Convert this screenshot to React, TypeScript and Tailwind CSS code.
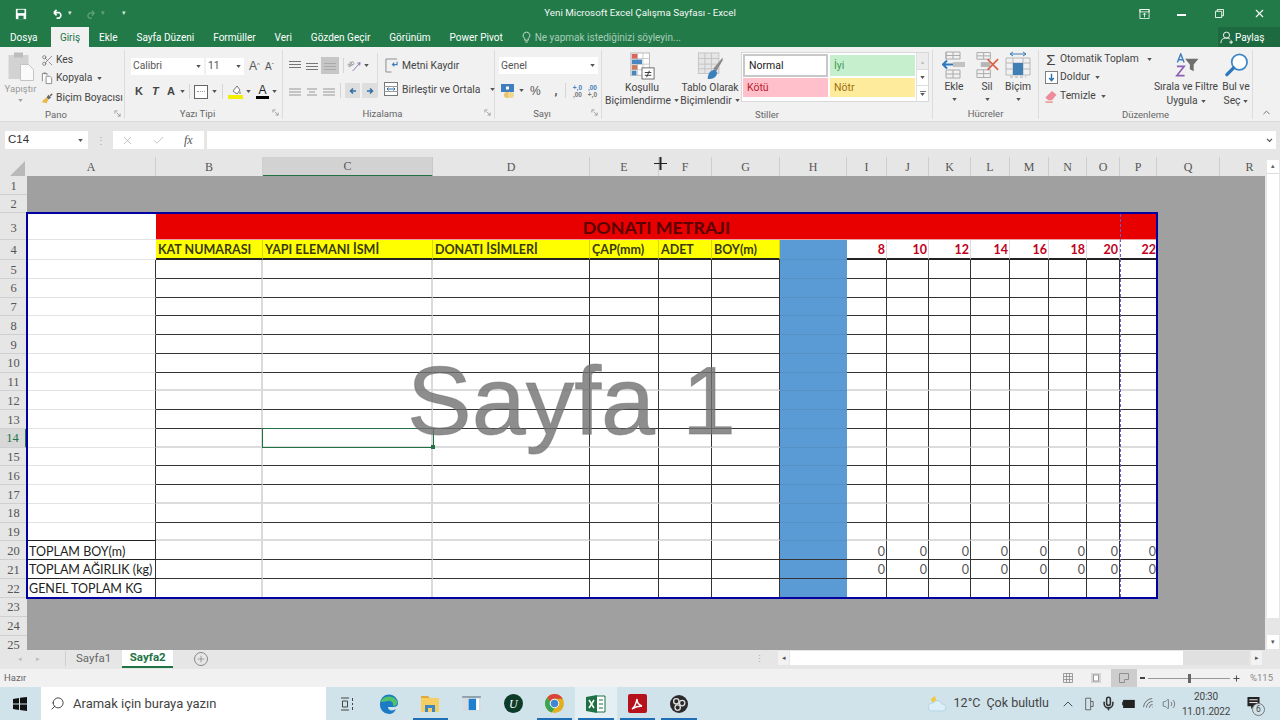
import type { ReactNode } from "react";
import { Check, ChevronUp, Mic, Plus, Scissors, Search, Volume2, Wifi, X } from "lucide-react";

const COLS = ["A", "B", "C", "D", "E", "F", "G", "H", "I", "J", "K", "L", "M", "N", "O", "P", "Q", "R"];
const ROWS = Array.from({ length: 25 }, (_, i) => i + 1);
const SIZES = ["I", "J", "K", "L", "M", "N", "O", "P"];
// the video frame shows some row lines washed out, these stay dark
const DARK_LINES = [4, 5, 6, 7, 8, 9, 10, 12, 13, 15, 16, 18, 20, 21];

function Caret({ className = "" }: { className?: string }) {
  return (
    <svg viewBox="0 0 6 4" className={`w-[5px] h-[3px] shrink-0 ${className}`} aria-hidden="true">
      <path d="M0 0h6L3 4Z" fill="#555" />
    </svg>
  );
}

function Launcher() {
  return (
    <svg viewBox="0 0 8 8" className="w-[7px] h-[7px]" aria-hidden="true">
      <path d="M1 1h3M1 1v3M3 3l4 4M7 4v3H4" fill="none" stroke="#999" strokeWidth="1" />
    </svg>
  );
}

function Group({ label, width, launcher, children }: { label: string; width: string; launcher?: boolean; children: ReactNode }) {
  return (
    <div className={`${width} shrink-0 flex flex-col mt-[3px] mb-[2px] border-r border-[#dcdcdc]`}>
      <div className="h-[57px] flex">{children}</div>
      <div className={`h-[13px] pt-[3px] flex items-center justify-center relative text-[9.500px] leading-none text-[#666] ${launcher ? "pr-[12px]" : ""}`}>
        {label}
        {launcher && (
          <span className="absolute right-[3px] top-[3px]">
            <Launcher />
          </span>
        )}
      </div>
    </div>
  );
}

function Combo({ text, width }: { text: string; width: string }) {
  return (
    <div className={`${width} h-[17px] bg-white flex items-center justify-between px-[2px] text-[10.300px] text-[#555]`}>
      <span>{text}</span>
      <Caret className="mr-[1px]" />
    </div>
  );
}

function Align({ top = false, mode = "left", faded = false, color }: { top?: boolean; mode?: string; faded?: boolean; color?: string }) {
  const c = color ?? (faded ? "#c4c4c4" : "#777");
  const w = mode === "center" ? [1, 3, 1] : [0, 0, 0];
  return (
    <svg viewBox="0 0 12 10" className="w-[12px] h-[10px]" aria-hidden="true">
      {[0, 1, 2].map((i) => (
        <rect key={i} x={w[i]} y={(top ? 0 : 2) + i * 3} width={12 - w[i] * 2} height={faded ? 2 : 1} fill={c} />
      ))}
    </svg>
  );
}

function CopyIcon() {
  return (
    <svg viewBox="0 0 14 14" className="w-[13px] h-[13px]" aria-hidden="true">
      <path d="M1.500 10V1.500h5v2M5.500 4.500h4l2 2v6h-6Z" fill="#fff" stroke="#888" />
      <rect x="3" y="0.500" width="2" height="2" fill="#888" />
    </svg>
  );
}

function BrushIcon() {
  return (
    <svg viewBox="0 0 14 14" className="w-[13px] h-[13px]" aria-hidden="true">
      <path d="M8 3l3 3-3 2-2-2Z" fill="#666" />
      <path d="M6 6l2 2-2 4-5-1 2-3Z" fill="#e9b949" />
      <path d="M9.500 3.500l2-2 1 1-2 2Z" fill="#555" />
    </svg>
  );
}

function PasteIcon() {
  return (
    <svg viewBox="0 0 26 29" className="w-[26px] h-[29px]" aria-hidden="true">
      <rect x="0.500" y="3" width="20" height="24" fill="#d2d2d2" />
      <rect x="6" y="0.500" width="9" height="5" fill="#bdbdbd" />
      <path d="M12.500 12.500h8l5 5v11h-13Z" fill="#fafafa" stroke="#c4c4c4" />
    </svg>
  );
}

function OrientIcon() {
  return (
    <svg viewBox="0 0 16 14" className="w-[15px] h-[13px]" aria-hidden="true">
      <text x="1" y="8" fontSize="7" fill="#777" fontFamily="Liberation Sans" transform="rotate(-35 4 7)">ab</text>
      <path d="M6 13L14 4M14 4l-3 .5M14 4l-.5 3" stroke="#8a6fb0" fill="none" />
    </svg>
  );
}

function WrapIcon() {
  return (
    <svg viewBox="0 0 14 16" className="w-[13px] h-[15px]" aria-hidden="true">
      <path d="M1 1h12M1 1v14h6" fill="none" stroke="#888" />
      <path d="M13 4v3H8M10 5L8 7l2 2" fill="none" stroke="#3f7fbf" strokeWidth="1.200" />
    </svg>
  );
}

function MergeIcon() {
  return (
    <svg viewBox="0 0 14 14" className="w-[14px] h-[14px]" aria-hidden="true">
      <rect x="0.500" y="0.500" width="13" height="13" fill="#fff" stroke="#777" />
      <path d="M0 4.500h14M0 9.500h14" stroke="#999" />
      <path d="M3 7h8M3 7l1.500-1.500M3 7l1.500 1.500M11 7L9.500 5.500M11 7L9.500 8.500" stroke="#2f6ea8" fill="none" />
    </svg>
  );
}

function Indent({ flip = false }: { flip?: boolean }) {
  return (
    <div className="w-[15px] h-[15px] bg-[#dedede] flex items-center justify-center">
      <svg viewBox="0 0 8 8" className={`w-[8px] h-[8px] ${flip ? "-scale-x-100" : ""}`} aria-hidden="true">
        <path d="M7 4H2M4 1.500L1.500 4 4 6.500" fill="none" stroke="#2f6ea8" strokeWidth="1.500" />
      </svg>
    </div>
  );
}

function CurrencyIcon() {
  return (
    <svg viewBox="0 0 16 16" className="w-[16px] h-[16px]" aria-hidden="true">
      <rect x="1" y="1" width="13" height="8" fill="#3f7fbf" />
      <rect x="6" y="3.500" width="3" height="3" fill="#fff" />
      <circle cx="7" cy="12" r="3" fill="#e8c46a" />
      <circle cx="11" cy="12" r="3" fill="#f0d792" />
    </svg>
  );
}

function Decimal({ flip = false }: { flip?: boolean }) {
  return (
    <div className="w-[13px] text-[6.500px] leading-[7px] font-bold text-[#777] text-right font-['Liberation_Sans',sans-serif]">
      <div className="text-[#3f7fbf]">{flip ? ",00" : "+,0"}</div>
      <div>{flip ? "+,0" : ",00"}</div>
    </div>
  );
}

function CondFormatIcon() {
  return (
    <svg viewBox="0 0 28 30" className="w-[26px] h-[28px]" aria-hidden="true">
      <rect x="2" y="1" width="20" height="24" fill="#fff" stroke="#b5b5b5" />
      <path d="M2 7h20M2 13h20M2 19h20M9 1v24M15 1v24" stroke="#c8c8c8" />
      <rect x="3" y="2" width="6" height="5" fill="#d8665c" />
      <rect x="3" y="8" width="11" height="5" fill="#4a87c0" />
      <rect x="3" y="14" width="6" height="5" fill="#d0785a" />
      <rect x="3" y="20" width="5" height="5" fill="#4a87c0" />
      <rect x="14" y="17" width="13" height="12" fill="#fff" stroke="#666" />
      <path d="M17 22h7M17 25h7M22 20l-3 7" stroke="#333" fill="none" />
    </svg>
  );
}

function TableFormatIcon() {
  return (
    <svg viewBox="0 0 28 30" className="w-[27px] h-[28px]" aria-hidden="true">
      <rect x="1" y="1" width="22" height="22" fill="#e5e5e5" stroke="#c4c4c4" />
      <path d="M1 7h22M1 13h22M1 18h22M8 1v22M15 1v22" stroke="#c2c2c2" />
      <path d="M27 6L17 18l3 3L27 9Z" fill="#8a8a8a" />
      <path d="M11 29c0-6 3-10 8-10l2 3c0 5-4 7-10 7Z" fill="#3a80bd" />
    </svg>
  );
}

function StyleCell({ text, className }: { text: string; className: string }) {
  return <div className={`flex items-center px-[4px] text-[10.500px] ${className}`}>{text}</div>;
}

function InsertIcon() {
  return (
    <svg viewBox="0 0 24 28" className="w-[24px] h-[28px]" aria-hidden="true">
      <path d="M4 1h14v7H4ZM4 1v7M11 1v7M4 4.500h14M4 19h14v8H4ZM11 19v8M4 23h14" fill="none" stroke="#aaa" />
      <rect x="11" y="11" width="12" height="5" fill="#c2c2c2" />
      <path d="M1 13.500h10M5 9.500l-4 4 4 4" fill="none" stroke="#2f78bd" strokeWidth="2" />
    </svg>
  );
}

function DeleteIcon() {
  return (
    <svg viewBox="0 0 26 28" className="w-[25px] h-[28px]" aria-hidden="true">
      <path d="M2 1h14v7H2ZM9 1v7M2 4.500h14M2 19h14v8H2ZM9 19v8M2 23h14" fill="none" stroke="#aaa" />
      <rect x="6" y="11" width="10" height="5" fill="#b5b5b5" />
      <path d="M13 8l11 11M24 8L13 19" stroke="#d9634c" strokeWidth="1.800" />
    </svg>
  );
}

function CellFormatIcon() {
  return (
    <svg viewBox="0 0 26 28" className="w-[26px] h-[28px]" aria-hidden="true">
      <path d="M5 3h16M5 3l3-2M5 3l3 2M21 3l-3-2M21 3l-3 2" fill="none" stroke="#3a7cb8" />
      <path d="M1 7h24v17H1ZM1 12h24M1 18h24M8 7v17M18 7v17" fill="none" stroke="#b8b8b8" />
      <rect x="8" y="12" width="10" height="12" fill="#3f7fb5" />
      <path d="M5 26h16" stroke="#aaa" strokeDasharray="3 2" />
    </svg>
  );
}

function FillIcon() {
  return (
    <svg viewBox="0 0 14 14" className="w-[13px] h-[13px]" aria-hidden="true">
      <rect x="0.500" y="0.500" width="13" height="13" fill="#fff" stroke="#777" />
      <path d="M7 3v7M4.500 7.500L7 10.500l2.500-3" fill="none" stroke="#2f6ea8" strokeWidth="1.500" />
    </svg>
  );
}

function EraserIcon() {
  return (
    <svg viewBox="0 0 14 14" className="w-[14px] h-[13px]" aria-hidden="true">
      <path d="M8 1l5 4-5 6H4L1 8Z" fill="#ee8b9a" />
      <path d="M1 13h8" stroke="#d9634c" />
    </svg>
  );
}

function SortIcon() {
  return (
    <svg viewBox="0 0 27 25" className="w-[27px] h-[24px]" aria-hidden="true">
      <path d="M4 10L7.500 1 11 10M5.200 7h4.600" fill="none" stroke="#3f7fbf" strokeWidth="1.500" />
      <path d="M3.500 14H11L3.500 23.500H11.500" fill="none" stroke="#8a5fb5" strokeWidth="1.800" />
      <path d="M12 6h14l-5 6v7l-4-2v-5Z" fill="#6f6f6f" />
    </svg>
  );
}

function FindIcon() {
  return (
    <svg viewBox="0 0 26 24" className="w-[25px] h-[24px]" aria-hidden="true">
      <circle cx="16" cy="9" r="8" fill="#fff" stroke="#3f86c6" strokeWidth="1.800" />
      <path d="M10 15L3 22" stroke="#2f78bd" strokeWidth="3.500" strokeLinecap="round" />
    </svg>
  );
}

function SmallButton({ icon, text, caret, className = "" }: { icon: ReactNode; text: string; caret?: boolean; className?: string }) {
  return (
    <div className={`h-[18px] flex items-center gap-[2px] text-[10.300px] text-[#444] whitespace-nowrap ${className}`}>
      <span className="w-[14px] flex justify-center shrink-0">{icon}</span>
      <span>{text}</span>
      {caret && <Caret className="ml-[3px]" />}
    </div>
  );
}

function BigButton({ icon, lines, width, caretLine }: { icon: ReactNode; lines: string[]; width: string; caretLine?: boolean }) {
  return (
    <div className={`${width} shrink-0 flex flex-col items-center text-[10.300px] leading-[13px] text-[#444] whitespace-nowrap`}>
      <div className="h-[29px] flex items-start">{icon}</div>
      {lines.map((l, i) => (
        <div key={l} className="flex items-center gap-[3px]">
          {l}
          {caretLine && i === lines.length - 1 && <Caret />}
        </div>
      ))}
      {!caretLine && <Caret className="mt-[5px]" />}
    </div>
  );
}

function Ribbon() {
  return (
    <div className="h-[75px] bg-[#f1f1f1] flex border-b border-[#dadada]">
      <Group label="Pano" width="w-[125px]" launcher>
        <div className="w-[41px] flex flex-col items-center pt-[2px] text-[9.500px] leading-[12px] text-[#999]">
          <PasteIcon />
          <span className="mt-[2px]">Yapıştır</span>
          <Caret className="mt-[4px] opacity-50" />
        </div>
        <div className="flex flex-col -ml-[1px] pt-[1px]">
          <SmallButton icon={<Scissors size={13} strokeWidth={1.300} className="text-[#666]" />} text="Kes" />
          <SmallButton icon={<CopyIcon />} text="Kopyala" caret />
          <SmallButton icon={<BrushIcon />} text="Biçim Boyacısı" className="mt-[2px]" />
        </div>
      </Group>

      <Group label="Yazı Tipi" width="w-[158px]" launcher>
        <div className="pl-[6px] pt-[7px] flex flex-col gap-[8px]">
          <div className="flex items-center">
            <Combo text="Calibri" width="w-[73px]" />
            <div className="w-[2px]" />
            <Combo text="11" width="w-[38px]" />
            <span className="ml-[5px] w-[16px] text-[12px] text-[#555] font-['Liberation_Sans',sans-serif]">A<sup className="text-[6px]">^</sup></span>
            <span className="w-[16px] text-[10px] text-[#555] font-['Liberation_Sans',sans-serif]">A<sup className="text-[6px]">ˇ</sup></span>
          </div>
          <div className="flex items-center h-[17px] text-[11px] font-bold text-[#444] font-['Liberation_Sans',sans-serif]">
            <span className="w-[16px] pl-[3px] ml-[1px]">K</span>
            <span className="w-[17px] pl-[4px] italic">T</span>
            <span className="w-[13px] pl-[2px]">A</span>
            <Caret className="ml-[2px]" />
            <span className="w-px h-[15px] bg-[#d5d5d5] ml-[4px]" />
            <span className="ml-[4px] w-[14px] h-[14px] border border-[#666] bg-white flex items-center justify-center">
              <span className="w-[8px] border-t border-dotted border-[#999]" />
            </span>
            <Caret className="ml-[4px]" />
            <span className="w-px h-[15px] bg-[#d5d5d5] ml-[5px]" />
            <span className="ml-[5px] w-[15px] flex flex-col items-center">
              <svg viewBox="0 0 12 10" className="w-[12px] h-[10px]" aria-hidden="true">
                <path d="M3 6l4-5 3 4-3 4Z" fill="#fff" stroke="#777" />
                <path d="M10 6l1 2.500h-2Z" fill="#777" />
              </svg>
              <span className="w-[15px] h-[4px] bg-[#f2f000]" />
            </span>
            <Caret className="ml-[3px]" />
            <span className="ml-[5px] w-[13px] flex flex-col items-center leading-[11px] text-[12px] font-normal text-[#222]">
              A<span className="w-[13px] h-[3px] bg-black" />
            </span>
            <Caret className="ml-[3px]" />
          </div>
        </div>
      </Group>

      <Group label="Hizalama" width="w-[212px]" launcher>
        <div className="w-[98px] pl-[6px] pt-[7px] flex flex-col gap-[8px]">
          <div className="flex items-center h-[17px]">
            <span className="w-[17px]"><Align top /></span>
            <span className="w-[15px]"><Align /></span>
            <span className="w-[18px] h-[17px] bg-[#c6c6c6] flex items-center justify-center"><Align color="#aaa" /></span>
            <span className="w-px h-[15px] bg-[#d5d5d5] ml-[4px]" />
            <span className="ml-[3px]"><OrientIcon /></span>
            <Caret className="ml-[2px]" />
          </div>
          <div className="flex items-center h-[17px]">
            <span className="w-[17px]"><Align faded /></span>
            <span className="w-[17px]"><Align faded mode="center" /></span>
            <span className="w-[17px]"><Align faded /></span>
            <span className="w-px h-[15px] bg-[#d5d5d5]" />
            <span className="ml-[4px]"><Indent /></span>
            <span className="ml-[2px]"><Indent flip /></span>
          </div>
        </div>
        <div className="border-l border-[#dcdcdc] h-[44px] mt-[3px] pl-[6px] pt-[5px] flex flex-col gap-[7px]">
          <SmallButton icon={<WrapIcon />} text="Metni Kaydır" className="gap-[4px]" />
          <SmallButton icon={<MergeIcon />} text="Birleştir ve Ortala" caret className="mt-[1px] gap-[4px] [&>svg]:ml-[6px]" />
        </div>
      </Group>

      <Group label="Sayı" width="w-[107px]" launcher>
        <div className="pl-[4px] pt-[7px] flex flex-col gap-[8px]">
          <Combo text="Genel" width="w-[99px]" />
          <div className="h-[17px] flex items-center text-[#555]">
            <span className="ml-[1px]"><CurrencyIcon /></span>
            <Caret className="ml-[3px]" />
            <span className="ml-[6px] w-[16px] text-[12px] font-['Liberation_Sans',sans-serif]">%</span>
            <span className="ml-[3px] w-[14px] text-center text-[12px] font-bold leading-[10px]">,</span>
            <span className="w-px h-[15px] bg-[#d5d5d5] ml-[2px]" />
            <span className="ml-[3px]"><Decimal /></span>
            <span className="ml-[2px]"><Decimal flip /></span>
          </div>
        </div>
      </Group>

      <Group label="Stiller" width="w-[331px]">
        <div className="w-[78px] pt-[2px] pl-[4px]">
          <BigButton icon={<CondFormatIcon />} lines={["Koşullu", "Biçimlendirme"]} width="w-[72px]" caretLine />
        </div>
        <div className="w-[60px] pt-[2px]">
          <BigButton icon={<TableFormatIcon />} lines={["Tablo Olarak", "Biçimlendir"]} width="w-[60px]" caretLine />
        </div>
        <div className="w-[188px] h-[50px] mt-[2px] ml-[1px] flex bg-white border border-[#d8d8d8]">
          <div className="w-[174px] grid grid-cols-2 grid-rows-[23px_19px] gap-x-[2px] gap-y-[1px] p-[1px]">
            <StyleCell text="Normal" className="border-2 border-[#c8c8c8] text-[#222]" />
            <StyleCell text="İyi" className="bg-[#c6efce] text-[#3f9a50] my-[1px]" />
            <StyleCell text="Kötü" className="bg-[#ffc0cb] text-[#b8202c]" />
            <StyleCell text="Nötr" className="bg-[#ffeb9c] text-[#9c6f10]" />
          </div>
          <div className="flex-1 flex flex-col border-l border-[#e0e0e0]">
            <div className="h-[16px] bg-[#ececec] flex items-center justify-center"><span className="text-[6px] text-[#bbb]">▴</span></div>
            <div className="h-[17px] flex items-center justify-center border-y border-[#dcdcdc]"><Caret /></div>
            <div className="flex-1 flex flex-col items-center justify-center gap-[1px]">
              <span className="w-[6px] h-px bg-[#777]" />
              <Caret />
            </div>
          </div>
        </div>
      </Group>

      <Group label="Hücreler" width="w-[106px]">
        <div className="flex pt-[1px] pl-[8px]">
          <BigButton icon={<InsertIcon />} lines={["Ekle"]} width="w-[26px]" />
          <BigButton icon={<DeleteIcon />} lines={["Sil"]} width="w-[26px] ml-[7px]" />
          <BigButton icon={<CellFormatIcon />} lines={["Biçim"]} width="w-[28px] ml-[4px]" />
        </div>
      </Group>

      <Group label="Düzenleme" width="w-[214px]">
        <div className="w-[127px] pl-[5px] flex flex-col">
          <SmallButton icon={<span className="text-[15px] leading-none text-[#444] font-['Liberation_Sans',sans-serif]">Σ</span>} text="Otomatik Toplam" caret className="[&>svg]:ml-[6px]" />
          <SmallButton icon={<FillIcon />} text="Doldur" caret />
          <SmallButton icon={<EraserIcon />} text="Temizle" caret className="mt-[1px]" />
        </div>
        <div className="pt-[3px] -ml-[6px]">
          <div className="w-[66px] flex flex-col items-center text-[10.300px] leading-[14px] text-[#444] whitespace-nowrap">
            <div className="h-[27px]"><SortIcon /></div>
            <div>Sırala ve Filtre</div>
            <div className="flex items-center gap-[3px]">Uygula <Caret /></div>
          </div>
        </div>
        <div className="pt-[3px] ml-[1px]">
          <div className="w-[32px] flex flex-col items-center text-[10.300px] leading-[14px] text-[#444] whitespace-nowrap">
            <div className="h-[27px]"><FindIcon /></div>
            <div>Bul ve</div>
            <div className="flex items-center gap-[3px]">Seç <Caret /></div>
          </div>
        </div>
      </Group>

      <div className="flex-1 flex items-end justify-center pb-[2px]">
        <ChevronUp size={11} className="text-[#666] mb-[1px]" />
      </div>
    </div>
  );
}

function TitleBar() {
  return (
    <div className="h-[27px] flex items-center text-white">
      <div className="flex-1 flex items-center">
        <svg viewBox="0 0 14 14" className="w-[12px] h-[12px] ml-[15px]" aria-hidden="true">
          <path d="M1 1h12v12H1Z" fill="#fff" />
          <rect x="3" y="2" width="8" height="4" fill="#227a48" />
          <rect x="4" y="9" width="6" height="4" fill="#227a48" />
        </svg>
        <svg viewBox="0 0 14 12" className="w-[13px] h-[11px] ml-[24px]" aria-hidden="true">
          <path d="M3 5h6a3.500 3.500 0 0 1 0 6H6M3 5l3-3M3 5l3 3" fill="none" stroke="#fff" strokeWidth="1.800" />
        </svg>
        <span className="ml-[4px] text-[7px] opacity-80">▾</span>
        <svg viewBox="0 0 14 12" className="w-[12px] h-[10px] ml-[13px] opacity-30" aria-hidden="true">
          <path d="M11 5H5a3.500 3.500 0 0 0 0 6h3M11 5L8 2M11 5L8 8" fill="none" stroke="#fff" strokeWidth="1.500" />
        </svg>
        <span className="ml-[4px] text-[7px] opacity-30">▾</span>
        <span className="ml-[17px] text-[7px] opacity-80">▾</span>
      </div>
      <div className="text-[9.800px] opacity-95">Yeni Microsoft Excel Çalışma Sayfası - Excel</div>
      <div className="flex-1 flex items-center justify-end">
        <svg viewBox="0 0 12 12" className="w-[11px] h-[10px] mr-[27px]" aria-hidden="true">
          <path d="M.5.5h11v11H.5Z" fill="none" stroke="#fff" />
          <path d="M.5.5h11v3H.5ZM6 10V5M4 7l2-2 2 2" fill="none" stroke="#fff" />
        </svg>
        <span className="w-[9px] h-[1.500px] bg-white mr-[29px] mt-[3px]" />
        <svg viewBox="0 0 10 10" className="w-[9px] h-[9px] mr-[29px]" aria-hidden="true">
          <path d="M.5 2.500h7v7h-7ZM2.500 2.500v-2h7v7h-2" fill="none" stroke="#fff" />
        </svg>
        <X size={13} strokeWidth={2} className="mr-[14px]" />
      </div>
    </div>
  );
}

function TabsBar() {
  const tabs = ["Ekle", "Sayfa Düzeni", "Formüller", "Veri", "Gözden Geçir", "Görünüm", "Power Pivot"];
  return (
    <div className="h-[20px] flex items-stretch text-[10px] text-white">
      <div className="w-[51px] pl-[10px] flex items-center">Dosya</div>
      <div className="w-[38px] bg-[#f1f1f1] text-[#217346] flex items-center justify-center">Giriş</div>
      <div className="ml-[10px] flex items-center gap-[19px] whitespace-nowrap">
        {tabs.map((t) => (
          <span key={t}>{t}</span>
        ))}
      </div>
      <div className="ml-[19px] flex items-center gap-[4px] text-[#a8cdb8]">
        <svg viewBox="0 0 10 14" className="w-[9px] h-[13px]" aria-hidden="true">
          <path d="M5 1a3.800 3.800 0 0 0-2 7v2h4V8a3.800 3.800 0 0 0-2-7ZM3.500 12h3" fill="none" stroke="#d5e5dc" />
        </svg>
        Ne yapmak istediğinizi söyleyin...
      </div>
      <div className="ml-auto w-[62px] bg-[#1e6a40] flex items-center gap-[2px] pl-[2px]">
        <svg viewBox="0 0 14 14" className="w-[13px] h-[13px]" aria-hidden="true">
          <circle cx="7" cy="4.500" r="3.300" fill="none" stroke="#fff" />
          <path d="M1 13c0-4 2.500-5.500 6-5.500 1.500 0 3 .4 4 1.500M10 12h4M12 10v4" fill="none" stroke="#fff" />
        </svg>
        Paylaş
      </div>
    </div>
  );
}

function FormulaBar() {
  return (
    <div className="h-[35px] bg-[#e6e6e6] flex items-start pt-[9px] pl-[5px] pr-[4px]">
      <div className="w-[83px] h-[18px] bg-white flex items-center justify-between pl-[3px] pr-[5px] text-[11.500px] text-[#333] font-['Liberation_Sans',sans-serif]">
        C14
        <Caret />
      </div>
      <div className="w-[25px] flex justify-center items-center h-[18px] text-[#aaa] text-[10px] tracking-tighter">⋮</div>
      <div className="w-[91px] h-[18px] bg-white flex items-center text-[#aaa]">
        <X size={13} strokeWidth={1.300} className="ml-[8px]" />
        <Check size={13} strokeWidth={1.300} className="ml-[18px]" />
        <span className="ml-[19px] text-[12px] italic text-[#555] font-['Liberation_Serif',serif]">fx</span>
      </div>
      <div className="flex-1 h-[18px] ml-[3px] bg-white flex items-center justify-end pr-[3px]">
        <svg viewBox="0 0 8 6" className="w-[7px] h-[5px]" aria-hidden="true">
          <path d="M1 1l3 3 3-3" fill="none" stroke="#555" strokeWidth="1.500" />
        </svg>
      </div>
    </div>
  );
}

function ColumnHeader() {
  return (
    <div className="h-[19px] grid grid-cols-[27px_129px_107px_170px_157px_69px_53px_68px_67px_40px_42px_42px_39px_39px_38px_33px_37px_63px_45px] bg-[#e6e6e6] text-[12px] text-[#555] font-['Liberation_Serif',serif] relative">
      <div className="flex items-end justify-end pr-[2px] pb-[1px]">
        <svg viewBox="0 0 15 15" className="w-[15px] h-[15px]" aria-hidden="true">
          <path d="M15 0v15H0Z" fill="#b9b9b9" />
        </svg>
      </div>
      {COLS.map((c) => (
        <div
          key={c}
          className={
            c === "C"
              ? "flex items-center justify-center bg-[#d2d2d2] border-b-2 border-[#217346] border-r border-r-[#c8c8c8]"
              : c === "R"
                ? "flex items-center justify-center pl-[14px] border-b border-b-[#bdbdbd]"
                : "flex items-center justify-center border-r border-[#cfcfcf] border-b border-b-[#bdbdbd]"
          }
        >
          {c}
        </div>
      ))}
      {/* mouse cursor caught in the frame */}
      <svg viewBox="0 0 13 13" className="absolute left-[654px] top-0 w-[13px] h-[13px]" aria-hidden="true">
        <path d="M6.500 0v13M0 6.500h13" stroke="#222" strokeWidth="1" />
        <path d="M5.500 0v13M7.500 0v13" stroke="#222" strokeWidth=".5" />
      </svg>
    </div>
  );
}

function cellClass(col: string, row: number) {
  const inTable = row >= 3 && row <= 22 && col !== "Q" && col !== "R";
  if (!inTable) return "";
  const classes: string[] = [];
  const isSize = SIZES.includes(col);

  if (col === "H") classes.push("bg-[#5b9bd5]");
  else if (row === 4 && col !== "A" && !isSize) classes.push("bg-[#ffff00]");
  else classes.push("bg-white");

  // horizontal lines
  if (col === "A") {
    classes.push(row >= 19 && row <= 21 ? "border-b border-b-[#222]" : "border-b border-b-[#e2e2e2]");
  } else if (col === "H" && row < 20) {
    classes.push("border-b border-b-[#5590c6]");
  } else if (DARK_LINES.includes(row)) {
    classes.push(row === 4 ? "border-b-2 border-b-[#222]" : "border-b border-b-[#333]");
  } else if (row < 22) {
    classes.push("border-b-2 border-b-[#dcdcdc]");
  }

  // vertical lines
  if (row >= 5) {
    if (col === "B" || col === "C") classes.push("border-r-2 border-r-[#dadada]");
    else if (col !== "P" && col !== "H") classes.push("border-r border-r-[#333]");
  } else if (row === 4 && col !== "H" && col !== "P" && col !== "A") {
    classes.push(isSize ? "border-r border-r-[#ddd]" : "border-r border-r-[#d8d800]");
  }
  return classes.join(" ");
}

function cellText(col: string, row: number): { text: string; className: string } | null {
  const headers: Record<string, string> = {
    B: "KAT NUMARASI",
    C: "YAPI ELEMANI İSMİ",
    D: "DONATI İSİMLERİ",
    E: "ÇAP(mm)",
    F: "ADET",
    G: "BOY(m)",
  };
  if (row === 4 && headers[col]) return { text: headers[col], className: "pl-[2px] pt-[3px] font-bold text-[#3a3a10]" };
  if (row === 4 && SIZES.includes(col)) {
    const size = (SIZES.indexOf(col) + 4) * 2;
    return { text: String(size), className: "justify-end pr-[1px] pt-[3px] font-bold text-[#c00020]" };
  }
  if ((row === 20 || row === 21) && SIZES.includes(col)) {
    return { text: "0", className: "justify-end pr-[1px] pt-[3px] text-[#555]" };
  }
  if (col === "A") {
    const labels: Record<number, string> = { 20: "TOPLAM BOY(m)", 21: "TOPLAM AĞIRLIK (kg)", 22: "GENEL TOPLAM KG" };
    if (labels[row]) return { text: labels[row], className: "pl-[2px] pt-[3px] text-[#222]" };
  }
  return null;
}

function Sheet() {
  return (
    <div className="relative h-[474px] overflow-hidden bg-[#a0a0a0]">
      <div className="grid grid-cols-[27px_129px_107px_170px_157px_69px_53px_68px_67px_40px_42px_42px_39px_39px_38px_33px_37px_63px_45px] grid-rows-[19px_18px_27px_20px_repeat(18,18.78px)_19px_19px_19px] text-[12.500px] font-['Lato',sans-serif]">
        {ROWS.map((row) => (
          <div key={row} className="contents">
            <div
              className={`flex items-center justify-center border-b border-[#cfcfcf] font-['Liberation_Serif',serif] text-[12.500px] ${
                row === 3 ? "pt-[5px]" : "pt-[2px]"
              } ${row === 14 ? "bg-[#d8d8d8] text-[#217346] border-r-2 border-r-[#217346]" : "bg-[#e6e6e6] text-[#555]"}`}
            >
              {row}
            </div>
            {row === 3 ? (
              <>
                <div className="bg-white border-b border-b-[#e2e2e2]" />
                <div className="col-span-15 pt-[3px] bg-[#e80000] border-b border-b-[#e8a0a0] flex items-center justify-center text-[17.800px] font-bold text-[#5a0000]">
                  DONATI METRAJI
                </div>
                <div />
                <div />
              </>
            ) : (
              COLS.map((col) => {
                const t = cellText(col, row);
                return (
                  <div key={col} className={`min-w-0 flex items-center whitespace-nowrap overflow-hidden ${cellClass(col, row)} ${t ? t.className : ""}`}>
                    {t ? t.text : ""}
                  </div>
                );
              })
            )}
          </div>
        ))}
      </div>

      {/* range outline, page break and selection sit over the cells */}
      <div className="absolute left-[26px] top-[36px] w-[1132px] h-[387px] border-2 border-[#0000a0] pointer-events-none" />
      <div className="absolute left-[1120px] top-[38px] h-[383px] border-l border-dashed border-[#6a5fd0] pointer-events-none" />
      <div className="absolute left-[262px] top-[252px] w-[172px] h-[20px] border border-[#217346] pointer-events-none">
        <span className="absolute -right-[2px] -bottom-[2px] w-[4px] h-[4px] bg-[#217346]" />
      </div>
      <div className="absolute left-[407px] top-[176px] text-[97px] leading-none text-[#707070]/80 [-webkit-text-stroke:1px_#70707080] whitespace-nowrap pointer-events-none font-['Liberation_Sans',sans-serif]">
        Sayfa 1
      </div>
    </div>
  );
}

function VerticalScroll() {
  return (
    <div className="w-[15px] bg-[#e6e6e6] flex flex-col items-center pt-[3px] pb-[1px]">
      <div className="w-[12px] h-[14px] bg-white flex items-center justify-center border-b border-[#ddd]">
        <span className="text-[7px] text-[#666]">▴</span>
      </div>
      <div className="w-[12px] h-[444px] bg-white" />
      <div className="flex-1" />
      <div className="w-[12px] h-[14px] bg-white flex items-center justify-center">
        <span className="text-[7px] text-[#555]">▾</span>
      </div>
    </div>
  );
}

function SheetTabs() {
  return (
    <div className="h-[19px] bg-[#e6e6e6] flex items-start text-[11.500px] text-[#666]">
      <span className="ml-[18px] mt-[4px] text-[7px] text-[#bbb]">◂</span>
      <span className="ml-[14px] mt-[4px] text-[7px] text-[#bbb]">▸</span>
      <span className="ml-[25px] mt-[1px] w-px h-[15px] bg-[#cfcfcf]" />
      <span className="ml-[10px]">Sayfa1</span>
      <div className="ml-[11px] w-[51px] h-[18px] bg-white border-b-2 border-[#217346] flex items-center justify-center font-bold text-[#217346]">
        Sayfa2
      </div>
      <span className="ml-[21px] mt-[2px] w-[14px] h-[14px] rounded-full border border-[#888] flex items-center justify-center">
        <Plus size={10} strokeWidth={1.300} />
      </span>
      <span className="ml-auto mr-[14px] mt-[3px] text-[9px] leading-[12px] text-[#aaa]">⋮</span>
      <div className="mr-[18px] mt-[1px] h-[14px] flex items-center">
        <span className="w-[11px] text-[7px] text-[#555] bg-[#f2f2f2] h-[14px] flex items-center justify-center">◂</span>
        <span className="ml-[1px] w-[393px] h-[14px] bg-white" />
        <span className="w-[66px] h-[14px] bg-[#e0e0e0]" />
        <span className="ml-[2px] w-[11px] text-[7px] text-[#555] bg-[#f2f2f2] h-[14px] flex items-center justify-center">▸</span>
      </div>
    </div>
  );
}

function StatusBar() {
  return (
    <div className="h-[18px] bg-[#f1f1f1] flex items-center text-[9.500px] text-[#666]">
      <span className="ml-[4px]">Hazır</span>
      <div className="ml-auto flex items-center h-full">
        <svg viewBox="0 0 10 10" className="w-[10px] h-[10px] mr-[18px]" aria-hidden="true">
          <path d="M.5.5h9v9h-9ZM.5 3.500h9M.5 6.500h9M3.500.5v9M6.500.5v9" fill="none" stroke="#888" strokeWidth=".8" />
        </svg>
        <svg viewBox="0 0 10 10" className="w-[10px] h-[10px] mr-[10px]" aria-hidden="true">
          <rect width="10" height="10" fill="#d5d5d5" />
          <rect x="2.500" y="2" width="5" height="6" fill="#fff" stroke="#777" strokeWidth=".7" />
        </svg>
        <div className="w-[26px] h-full bg-[#cdcdcd] flex items-center justify-center">
          <svg viewBox="0 0 10 10" className="w-[10px] h-[10px]" aria-hidden="true">
            <path d="M.5.5h9v6h-4v3h-5Z" fill="none" stroke="#888" strokeWidth=".9" />
          </svg>
        </div>
        <span className="ml-[3px] w-[5px] h-[1.500px] bg-[#444]" />
        <div className="ml-[3px] w-[82px] h-px bg-[#999] relative">
          <span className="absolute left-[40px] -top-[4px] w-[3px] h-[9px] bg-[#666]" />
        </div>
        <Plus size={9} strokeWidth={2.500} className="ml-[2px] text-[#444]" />
        <span className="ml-[9px] mr-[7px] text-[#888]">%115</span>
      </div>
    </div>
  );
}

function TaskIcon({ children, active, underline }: { children: ReactNode; active?: boolean; underline?: boolean }) {
  return (
    <div className={`w-[41.400px] h-full flex items-center justify-center relative ${active ? "bg-[#e4eff3]" : ""}`}>
      {children}
      {underline && <span className="absolute bottom-0 left-[3px] right-[3px] h-[2px] bg-[#1e6fb5]" />}
    </div>
  );
}

function Taskbar() {
  return (
    <div className="h-[33px] bg-[#d0e2ea] flex items-center">
      <svg viewBox="0 0 14 14" className="w-[14px] h-[14px] ml-[13px]" aria-hidden="true">
        <path d="M0 2l6-1v5.500H0ZM7 .8L14 0v6.500H7ZM0 7.500h6V13l-6-1ZM7 7.500h7V14l-7-1Z" fill="#111" />
      </svg>
      <div className="ml-[14px] w-[285px] h-full bg-white flex items-center">
        <Search size={15} strokeWidth={1.300} className="ml-[9px] -scale-x-100 text-[#222]" />
        <span className="ml-[8px] text-[13px] text-[#444]">Aramak için buraya yazın</span>
      </div>
      <div className="ml-[-2px] flex items-center h-full pl-[3px]">
        <TaskIcon>
          <svg viewBox="0 0 15 14" className="w-[15px] h-[14px]" aria-hidden="true">
            <path d="M1 1h8M1 13h8M2.500 4h5v6h-5ZM12.500 1v3M12.500 6v2M12.500 10v3" fill="none" stroke="#444" />
          </svg>
        </TaskIcon>
        <TaskIcon>
          <svg viewBox="0 0 20 20" className="w-[20px] h-[20px]" aria-hidden="true">
            <path d="M1 10a9 9 0 0 1 18-1c0 3-2 4-5 4H9c0 3 3 4 6 3l2-1c-1 3-4 5-7 5a9 9 0 0 1-9-10Z" fill="#1c7bc4" />
            <path d="M2 7c2-5 12-7 16 0 1 3-1 5-4 5 1-3-2-6-5-5-3 0-6 2-7 0Z" fill="#4fc36a" />
          </svg>
        </TaskIcon>
        <TaskIcon underline>
          <svg viewBox="0 0 20 18" className="w-[20px] h-[18px]" aria-hidden="true">
            <path d="M1 1h7l2 2H1Z" fill="#e0a93a" />
            <path d="M1 3h18v14H1Z" fill="#f5cf64" />
            <path d="M5 10h10v7h-3v-4H8v4H5Z" fill="#3d87c4" />
          </svg>
        </TaskIcon>
        <TaskIcon>
          <svg viewBox="0 0 20 16" className="w-[19px] h-[15px]" aria-hidden="true">
            <rect width="20" height="16" fill="#d6dde2" />
            <rect y="0" width="20" height="2" fill="#8fa0ad" />
            <rect x="7" y="3" width="8" height="12" fill="#1f7fd0" />
            <rect x="15" y="3" width="3" height="12" fill="#fff" />
          </svg>
        </TaskIcon>
        <TaskIcon>
          <div className="w-[19px] h-[19px] rounded-full bg-[#0d3b2a] flex items-center justify-center text-[12px] italic text-white font-['Liberation_Serif',serif]">U</div>
        </TaskIcon>
        <TaskIcon underline>
          <svg viewBox="0 0 20 20" className="w-[19px] h-[19px]" aria-hidden="true">
            <circle cx="10" cy="10" r="10" fill="#e0b020" />
            <path d="M10 0a10 10 0 0 1 8.700 5H10a5 5 0 0 0-4.800 3.500L2.600 3.300A10 10 0 0 1 10 0Z" fill="#d9453a" />
            <path d="M2.600 3.300A10 10 0 0 0 7 19.500l3.300-5a5 5 0 0 1-5.100-6Z" fill="#3aa655" />
            <circle cx="10" cy="10" r="4.500" fill="#3f85d8" stroke="#fff" />
          </svg>
        </TaskIcon>
        <TaskIcon active underline>
          <svg viewBox="0 0 20 18" className="w-[20px] h-[18px]" aria-hidden="true">
            <path d="M11 1h8v16h-8" fill="#fff" stroke="#1e7145" />
            <path d="M13 5h4M13 9h4M13 13h4" stroke="#1e7145" />
            <path d="M0 2l11-2v18L0 16Z" fill="#1e7145" />
            <path d="M3 5l5 8M8 5l-5 8" stroke="#fff" strokeWidth="1.500" />
          </svg>
        </TaskIcon>
        <TaskIcon underline>
          <div className="w-[19px] h-[19px] rounded-[2px] bg-[#b5121b] flex items-center justify-center">
            <svg viewBox="0 0 14 14" className="w-[14px] h-[14px]" aria-hidden="true">
              <path d="M2 12c2-1 4-5 5-10 0 4 2 6 5 7-3 0-7 1-10 3Z" fill="none" stroke="#fff" strokeWidth="1.400" />
            </svg>
          </div>
        </TaskIcon>
        <TaskIcon underline>
          <svg viewBox="0 0 20 20" className="w-[18px] h-[18px]" aria-hidden="true">
            <circle cx="10" cy="10" r="10" fill="#2a2a2a" />
            <circle cx="7" cy="7" r="3" fill="none" stroke="#ddd" strokeWidth="1.500" />
            <circle cx="13.500" cy="9" r="3" fill="none" stroke="#ddd" strokeWidth="1.500" />
            <circle cx="8.500" cy="14" r="3" fill="none" stroke="#ddd" strokeWidth="1.500" />
          </svg>
        </TaskIcon>
      </div>
      <div className="ml-auto flex items-center h-full text-[#444]">
        <svg viewBox="0 0 20 18" className="w-[20px] h-[18px]" aria-hidden="true">
          <path d="M8 1l1 4 3 1-3 2-4-1-1-3Z" fill="#f0c838" />
          <path d="M5 16a4 4 0 0 1 1-8 5 5 0 0 1 9 1 3.500 3.500 0 0 1 1 7Z" fill="#dceef8" stroke="#b5d5e8" />
        </svg>
        <span className="ml-[7px] text-[12.500px]">12°C</span>
        <span className="ml-[6px] text-[12.500px]">Çok bulutlu</span>
        <ChevronUp size={16} strokeWidth={1.400} className="ml-[11px]" />
        <svg viewBox="0 0 12 16" className="w-[10px] h-[14px] ml-[8px]" aria-hidden="true">
          <path d="M2 1h6v14H2ZM8 5h3v6H8" fill="none" stroke="#555" />
        </svg>
        <Mic size={15} strokeWidth={2.500} className="ml-[7px] text-[#333]" />
        <svg viewBox="0 0 14 10" className="w-[13px] h-[9px] ml-[6px]" aria-hidden="true">
          <rect x="1" y="1" width="13" height="9" fill="#222" />
          <rect y="3" width="1.500" height="4" fill="#222" />
        </svg>
        <Wifi size={14} strokeWidth={1.300} className="ml-[7px] text-[#555] rotate-[-45deg]" />
        <Volume2 size={14} strokeWidth={1.200} className="ml-[6px] text-[#555]" />
        <div className="ml-[1px] w-[58px] flex flex-col items-center text-[10px] tracking-[-0.2px] leading-[15px]">
          <span>20:30</span>
          <span>11.01.2022</span>
        </div>
        <div className="ml-[12px] mr-[21px] relative w-[12px] h-[14px]">
          <svg viewBox="0 0 13 14" className="w-[13px] h-[13px]" aria-hidden="true">
            <path d="M0 0h13v10H7l-3 3v-3H0Z" fill="#222" />
            <path d="M2 3h9M2 6h9" stroke="#fff" />
          </svg>
          <span className="absolute left-[5px] top-[6px] w-[13px] h-[13px] rounded-full border border-[#777] bg-[#d0e2ea] flex items-center justify-center text-[8.500px] leading-none">6</span>
        </div>
      </div>
    </div>
  );
}

export default function App() {
  return (
    <div className="w-[1280px] h-[720px] overflow-hidden flex flex-col font-['Roboto',sans-serif]">
      <div className="bg-[#227a48]">
        <TitleBar />
        <TabsBar />
      </div>
      <Ribbon />
      <FormulaBar />
      <div className="h-[493px] flex">
        <div className="w-[1265px] flex flex-col">
          <ColumnHeader />
          <Sheet />
        </div>
        <VerticalScroll />
      </div>
      <SheetTabs />
      <StatusBar />
      <Taskbar />
    </div>
  );
}
